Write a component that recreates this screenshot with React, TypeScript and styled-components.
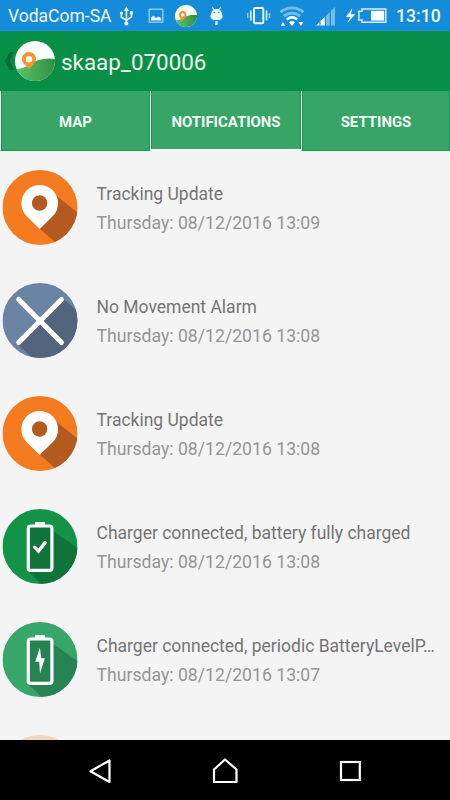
import React from "react";
import styled, { createGlobalStyle } from "styled-components";

const GlobalStyle = createGlobalStyle`
  * { box-sizing: border-box; }
  body { margin: 0; background: #f4f4f4; font-family: Roboto, "Noto Sans", sans-serif; }
  svg { display: block; flex: none; }
`;

const Screen = styled.div`
  width: 450px;
  height: 800px;
  display: flex;
  flex-direction: column;
  overflow: hidden;
  background: #f4f4f4;
`;

const StatusBar = styled.header`
  height: 31px;
  flex: none;
  display: flex;
  align-items: center;
  padding-left: 8px;
  background: #158cda;
  color: #f3f9fd;
`;

const Carrier = styled.span`
  width: 111px;
  font-size: 17.5px;
  line-height: 31px;
  padding-top: 2px;
  white-space: nowrap;
`;

const Clock = styled.span`
  font-size: 17.6px;
  line-height: 31px;
  padding-top: 2px;
  white-space: nowrap;
  font-weight: 500;
`;

const AppBar = styled.div`
  height: 60px;
  flex: none;
  display: flex;
  align-items: center;
  padding-left: 5px;
  background: #078f45;
`;

const Title = styled.h1`
  margin: 0 0 0 6px;
  padding-top: 1px;
  font-size: 22.4px;
  line-height: 28px;
  font-weight: 400;
  color: #eef8f1;
`;

const Tabs = styled.nav`
  height: 60px;
  flex: none;
  display: grid;
  grid-template-columns: 150px 151px 149px;
`;

const Tab = styled.button<{ $active?: boolean }>`
  height: 60px;
  padding: ${(p) => (p.$active ? "3px" : "2px")} 0 0;
  border: 0;
  border-left: 1px solid #f2faf5;
  border-bottom: ${(p) => (p.$active ? "2px solid #fff" : "1px solid #0c984d")};
  background: #36a566;
  box-shadow: inset 1px 0 #16984f, inset -1px 0 #16984f;
  color: #f3faf5;
  font: 700 14.95px/20px Roboto, sans-serif;
`;

const List = styled.ul`
  flex: 1;
  min-height: 0;
  overflow: hidden;
  margin: 0;
  padding: 19px 0 0;
  list-style: none;
`;

const Row = styled.li<{ $faded?: boolean }>`
  height: 113px;
  display: flex;
  align-items: flex-start;
  padding-left: 2px;
  opacity: ${(p) => (p.$faded ? 0.25 : 1)};
`;

const RowText = styled.div`
  margin: 10px 0 0 18.5px;
  display: flex;
  flex-direction: column;
  gap: 1px;
  white-space: nowrap;
`;

const RowTitle = styled.span`
  font-size: 17.5px;
  line-height: 28px;
  color: #757575;
`;

const RowDate = styled.span`
  font-size: 17.65px;
  line-height: 28px;
  color: #959595;
`;

const NavBar = styled.footer`
  height: 60px;
  flex: none;
  display: grid;
  grid-template-columns: 162px 126px 124px;
  background: #000;
`;

const NavButton = styled.button`
  padding: 2px 0 0;
  border: 0;
  background: none;
  display: flex;
  align-items: center;
  justify-content: center;
  &:first-child { padding-left: 37px; }
`;

type Kind = "pin" | "cross" | "full" | "charging";

const colors: Record<Kind, [string, string]> = {
  pin: ["#f47b20", "#b35a20"],
  cross: ["#6b84a3", "#52657c"],
  full: ["#129347", "#10743a"],
  charging: ["#36a669", "#278254"],
};

const shadows: Record<Kind, string> = {
  pin: "M53 25L76 43.5V76H57L37 58.5Z",
  cross: "M60 15L76 29V76H31L15 61.5Z",
  full: "M50 21.5L76 39.5V76H40L25.5 62Z",
  charging: "M50 21.5L76 39.5V76H40L25.5 62Z",
};

function EventIcon({ kind, id }: { kind: Kind; id: string }) {
  const [base, shade] = colors[kind];
  return (
    <svg width="76" height="75" viewBox="-0.5 0 76 75">
      <clipPath id={id}><circle cx="37.5" cy="37.5" r="37.5" /></clipPath>
      <g clipPath={`url(#${id})`}>
        <rect width="75" height="75" fill={base} />
        <path d={shadows[kind]} fill={shade} />
      </g>
      {kind === "pin" && (
        <>
          <path d="M37.2 15C27 15 18.9 23 18.9 33C18.9 38.6 20.6 42.5 24 46L37.2 59L50.4 46C53.8 42.5 55.5 38.6 55.5 33C55.5 23 47.4 15 37.2 15Z" fill="#fff" />
          <circle cx="37.1" cy="33" r="7.7" fill={shade} />
        </>
      )}
      {kind === "cross" && (
        <path d="M16.2 16.5L59 59.6M59 16.5L16.2 59.6" stroke="#fff" strokeWidth="5" strokeLinecap="round" />
      )}
      {(kind === "full" || kind === "charging") && (
        <>
          <rect x="32.3" y="13" width="10.4" height="4" rx="1" fill="#fff" />
          <rect x="25.8" y="17" width="23.6" height="44.4" rx="2.4" fill={shade} stroke="#fff" strokeWidth="3.2" />
        </>
      )}
      {kind === "full" && (
        <path d="M32.2 38.2L36 42.2L42.6 33.6" fill="none" stroke="#fff" strokeWidth="3.4" strokeLinecap="round" />
      )}
      {kind === "charging" && <path d="M37.4 25.6L32.8 39.7H36.7L37.5 51.4L42.3 36.2H38.7Z" fill="#fff" />}
    </svg>
  );
}

function Logo({ size, id }: { size: number; id: string }) {
  return (
    <svg width={size} height={size} viewBox="0 0 40 40">
      <defs>
        <clipPath id={id}><circle cx="20" cy="20" r="20" /></clipPath>
        <linearGradient id={`${id}g`} x1="0" y1="0.5" x2="1" y2="0.5">
          <stop stopColor="#5ac76a" />
          <stop offset="1" stopColor="#338e45" />
        </linearGradient>
      </defs>
      <g clipPath={`url(#${id})`}>
        <rect width="40" height="40" fill="#fff" />
        <path d="M0 28Q8 28 14 24Q25 16 40 18V40H0Z" fill={`url(#${id}g)`} />
      </g>
      <path d="M14 11C10 11 7 14 7 18C7 22 10 23.5 14 28C18 23.5 21 22 21 18C21 14 18 11 14 11Z" fill="#f7942b" />
      <circle cx="14" cy="18.2" r="3.2" fill="#fff" />
    </svg>
  );
}

function StatusIcons() {
  return (
    <svg width="277" height="31" viewBox="119 0 277 31" fill="#e8f4fc">
      {/* USB */}
      <g fill="none" stroke="#e8f4fc" strokeWidth="1.6">
        <path d="M126.4 9V23M121.4 14V17.2L126.4 20.4L131.5 16.8V13" />
      </g>
      <path d="M126.4 6.5L129 11H123.8Z" />
      <circle cx="121.4" cy="13" r="1.6" />
      <rect x="130" y="11.2" width="3" height="3" />
      <circle cx="126.4" cy="23.4" r="2" />
      {/* Picture */}
      <rect x="149.2" y="9.2" width="13.6" height="13" fill="none" stroke="#a8d5f3" strokeWidth="1.2" />
      <path d="M151 20.5V17.5L153.5 15.5L156 18L158.5 16.5L161.3 18.5V20.5Z" />
      <g transform="translate(175 5)"><Logo size={22} id="status-logo" /></g>
      {/* Debugging robot */}
      <path d="M210 15.5H223Q222.5 19 220 20H213Q210.4 19 210 15.5ZM211 14.5Q211.3 10.8 213.5 10L211.7 7.2L212.5 6.7L214.5 9.3Q216.5 8.7 218.5 9.3L220.4 6.7L221.2 7.2L219.5 10Q221.7 10.8 222 14.5Z" />
      <rect x="211" y="14" width="11" height="2" />
      <rect x="215.3" y="21" width="2.3" height="4" />
      <g fill="#158cda"><circle cx="214.3" cy="12.5" r=".7" /><circle cx="218.8" cy="12.5" r=".7" /></g>
      {/* Vibrate */}
      <rect x="254" y="8" width="9.3" height="15.2" rx="1" fill="none" stroke="#f3f9fd" strokeWidth="1.9" />
      <path d="M250.8 10.5V20.5M266.5 10.5V20.5" stroke="#d6ebf9" strokeWidth="1.7" />
      <path d="M247.8 13V18M269.4 13V18" stroke="#a8d5f3" strokeWidth="1.3" />
      {/* Wi-Fi */}
      <g fill="none" stroke="#75bceb" strokeWidth="2.8">
        <path d="M280.4 12.2Q292 3.5 303.6 12.2" />
        <path d="M283.7 16.2Q292 9.8 300.3 16.2" />
      </g>
      <path d="M286.8 19.5Q292 15.3 297.2 19.5" fill="none" stroke="#fff" strokeWidth="2.5" />
      <path d="M289 22.2Q292 20 295 22.2L292 26ZM280.7 26L283 22L285.3 26ZM298.4 22H303.4L300.9 26Z" fill="#fff" />
      {/* Signal */}
      <path d="M316 25.5L319.5 22V25.5ZM320.5 21L324.8 17V25.5H320.5Z" fill="#fff" />
      <path d="M326 15.8L329.8 12V25.5H326ZM331 11L335 7V25.5H331Z" fill="#75bceb" />
      {/* Battery */}
      <path d="M352.5 8L346 17H350L347.5 23L355.2 14.3H350.9Z" fill="#fff" />
      <path d="M362 9H385.8V22.3H362V20H358.8V11.2H362Z" fill="none" stroke="#d9eefb" strokeWidth="1.5" />
      <rect x="371" y="10.8" width="13.2" height="9.8" fill="#fff" />
    </svg>
  );
}

const events: { kind: Kind; title: string; time: string }[] = [
  { kind: "pin", title: "Tracking Update", time: "13:09" },
  { kind: "cross", title: "No Movement Alarm", time: "13:08" },
  { kind: "pin", title: "Tracking Update", time: "13:08" },
  { kind: "full", title: "Charger connected, battery fully charged", time: "13:08" },
  { kind: "charging", title: "Charger connected, periodic BatteryLevelP…", time: "13:07" },
];

export default function App() {
  return (
    <Screen>
      <GlobalStyle />
      <StatusBar>
        <Carrier>VodaCom-SA</Carrier>
        <StatusIcons />
        <Clock>13:10</Clock>
      </StatusBar>
      <AppBar>
        <svg width="10" height="20" viewBox="0 0 10 20">
          <path d="M4.5 1H9L5 10L9 19H4.5L0 10Z" fill="#056c36" />
        </svg>
        <Logo size={40} id="bar-logo" />
        <Title>skaap_070006</Title>
      </AppBar>
      <Tabs>
        <Tab>MAP</Tab>
        <Tab $active>NOTIFICATIONS</Tab>
        <Tab>SETTINGS</Tab>
      </Tabs>
      <List>
        {events.map((e, i) => (
          <Row key={i}>
            <EventIcon kind={e.kind} id={`event-${i}`} />
            <RowText>
              <RowTitle>{e.title}</RowTitle>
              <RowDate>Thursday: 08/12/2016 {e.time}</RowDate>
            </RowText>
          </Row>
        ))}
        <Row $faded>
          <EventIcon kind="pin" id="event-next" />
        </Row>
      </List>
      <NavBar>
        <NavButton aria-label="Back">
          <svg width="24" height="28" viewBox="0 0 24 28">
            <path d="M21.5 3.5V25L2.5 14.2Z" fill="none" stroke="#fff" strokeWidth="2.2" strokeLinejoin="round" />
          </svg>
        </NavButton>
        <NavButton aria-label="Home">
          <svg width="28" height="28" viewBox="0 0 28 28">
            <path d="M3 12.5L14 2.5L25.5 12.5V25H3Z" fill="none" stroke="#fff" strokeWidth="2.2" strokeLinejoin="round" />
          </svg>
        </NavButton>
        <NavButton aria-label="Recent">
          <svg width="24" height="24" viewBox="0 0 24 24">
            <rect x="3" y="3" width="18.8" height="18" fill="none" stroke="#fff" strokeWidth="2.2" />
          </svg>
        </NavButton>
      </NavBar>
    </Screen>
  );
}
